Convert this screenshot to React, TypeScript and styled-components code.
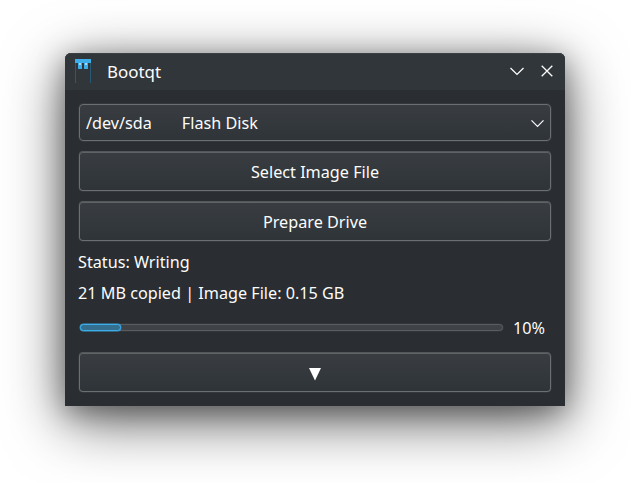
import React from "react";
import styled, { createGlobalStyle } from "styled-components";

const GlobalStyle = createGlobalStyle`
  body {
    margin: 0;
    background: #fff;
    overflow: hidden;
  }
  *, *::before, *::after { box-sizing: border-box; }
`;

const Desktop = styled.main`
  width: 630px;
  height: 483px;
  padding: 53px 65px 77px;
  background: #fff;
  font-family: "Noto Sans", sans-serif;
  font-size: 16.2px;
  line-height: 23px;
  color: #fcfcfc;
`;

const Window = styled.section`
  width: 500px;
  height: 353px;
  display: flex;
  flex-direction: column;
  border-radius: 6px 6px 0 0;
  background: #2a2e32;
  box-shadow: 0 15px 60px rgba(0, 0, 0, 0.6), 0 6px 28px rgba(0, 0, 0, 0.36);
`;

const TitleBar = styled.header`
  height: 37px;
  flex: none;
  display: flex;
  align-items: center;
  padding: 0 11px 1px 9px;
  border-radius: 6px 6px 0 0;
  background: #31363b;
  box-shadow: inset 0 1px 0 #3b4045;
`;

const Title = styled.h1`
  margin: 0 auto 0 15px;
  font-size: 16.9px;
  font-weight: 400;
`;

const WindowControl = styled.button`
  width: 14px;
  height: 14px;
  margin-left: 16px;
  padding: 0;
  border: 0;
  background: none;
  display: flex;
`;

const Body = styled.div`
  flex: 1;
  display: flex;
  flex-direction: column;
  padding: 14px 14px 14px;
`;

const Control = styled.button<{ $height: number; $gap: number }>`
  width: 472px;
  height: ${(p) => p.$height}px;
  margin: 0 0 ${(p) => p.$gap}px;
  padding: 2px 0 0;
  flex: none;
  display: flex;
  align-items: center;
  justify-content: center;
  border: 1px solid #6b6f71;
  border-top-color: #5f6366;
  border-radius: 4px;
  background: linear-gradient(#393d41, #2f3438);
  box-shadow: 0 -1px 0 #54585b, 0 0 0 1px #34383c;
  color: inherit;
  font: inherit;
`;

const DriveSelect = styled(Control)`
  justify-content: flex-start;
  padding: 2px 6px 0 6px;
  border-top-color: #6b6f71;
  box-shadow: 0 0 0 1px #34383c;
`;

const DriveName = styled.span`
  margin: 0 auto 0 30px;
`;

const Label = styled.p<{ $gap: number }>`
  margin: 0 0 ${(p) => p.$gap}px -1px;
  height: 23px;
  white-space: nowrap;
`;

const ProgressRow = styled.div`
  height: 23px;
  margin-bottom: 13px;
  padding-left: 1px;
  display: flex;
  align-items: center;
`;

const Track = styled.div`
  width: 423px;
  height: 7px;
  margin: 0 10px 2px 0;
  border-radius: 4px;
  border: 1px solid #595d60;
  background: #3f4347;
  box-shadow: 0 0 0 0.5px #3a3e42;
`;

const Fill = styled.div`
  height: 7px;
  margin: -1px;
  border: 1px solid #3daee9;
  border-radius: 4px;
  background: #346f90;
  box-shadow: 0 0 0 0.4px #3394c6;
`;

const AppIcon = () => (
  <svg width="18" height="24" viewBox="0 0 18 24">
    <path d="M1.5 4v20M16.5 4v20" stroke="#285a75" strokeWidth="1" />
    <path d="M1 0h16v4H1z" fill="#3daee9" />
    <path d="M4 3h4v7H4zM10 3h4v7h-4z" fill="#3daee9" />
    <path d="M5 4h2v2H5zM11 4h2v2h-2z" fill="#a4daf6" />
  </svg>
);

const Chevron = () => (
  <svg width="14" height="14" viewBox="0 0 14 14" fill="none" stroke="#fcfcfc" strokeWidth="1.3">
    <path d="M0.5 4 7 10.4 13.5 4" />
  </svg>
);

const SmallChevron = () => (
  <svg width="13" height="14" viewBox="0 0 13 14" fill="none" stroke="#fcfcfc" strokeWidth="1.2">
    <path d="M0.5 3.4 6.5 9.4 12.5 3.4" />
  </svg>
);

const Cross = () => (
  <svg width="14" height="14" viewBox="0 0 14 14" fill="none" stroke="#fcfcfc" strokeWidth="1.3">
    <path d="M1.7 1.7 12.3 12.3M12.3 1.7 1.7 12.3" />
  </svg>
);

const DownTriangle = () => (
  <svg width="12" height="16" viewBox="0 0 12 16">
    <path d="M0 2h12L6 14.5z" fill="#fff" />
  </svg>
);

export default function App() {
  const progress = 10;
  return (
    <>
      <GlobalStyle />
      <Desktop>
        <Window>
          <TitleBar>
            <AppIcon />
            <Title>Bootqt</Title>
            <WindowControl aria-label="Minimize"><Chevron /></WindowControl>
            <WindowControl aria-label="Close"><Cross /></WindowControl>
          </TitleBar>
          <Body>
            <DriveSelect $height={37} $gap={11}>
              <span>/dev/sda</span>
              <DriveName>Flash Disk</DriveName>
              <SmallChevron />
            </DriveSelect>
            <Control $height={39} $gap={11}>Select Image File</Control>
            <Control $height={39} $gap={10}>Prepare Drive</Control>
            <Label $gap={8}>Status: Writing</Label>
            <Label $gap={12}>21 MB copied | Image File: 0.15 GB</Label>
            <ProgressRow>
              <Track>
                <Fill style={{ width: `calc(${progress}% - 1px)` }} />
              </Track>
              <span>{progress}%</span>
            </ProgressRow>
            <Control $height={39} $gap={0} aria-label="Show details"><DownTriangle /></Control>
          </Body>
        </Window>
      </Desktop>
    </>
  );
}
